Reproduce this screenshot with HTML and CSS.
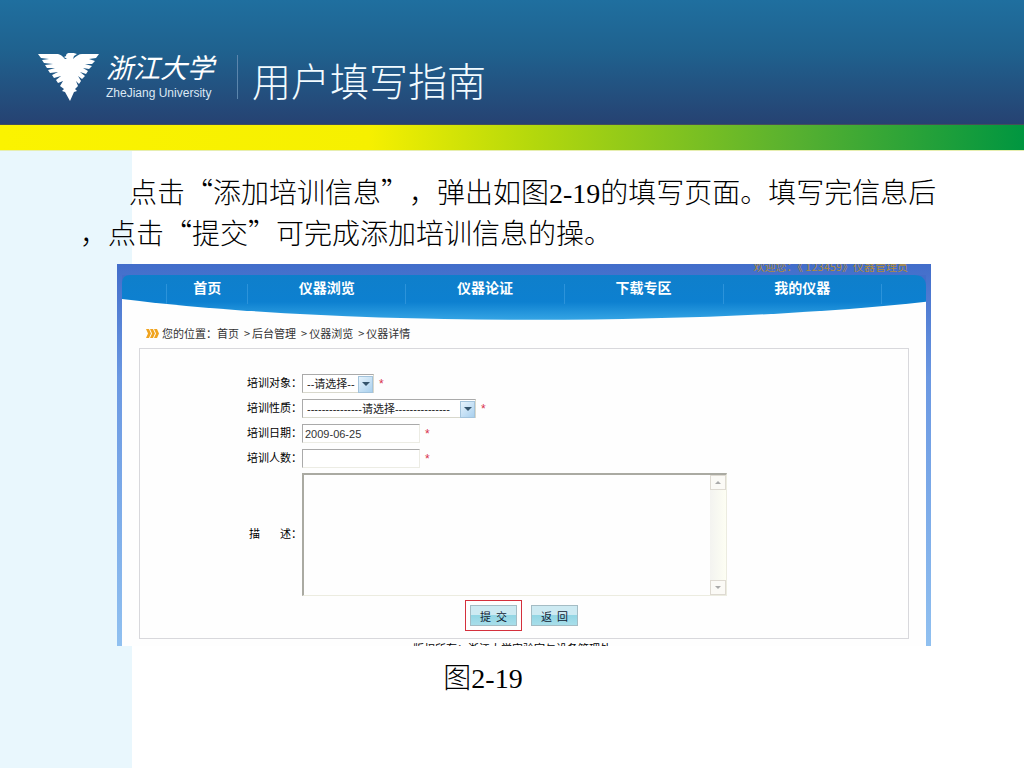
FILE: index.html
```html
<!DOCTYPE html>
<html lang="zh-CN">
<head>
    <meta charset="UTF-8">
    <meta name="viewport" content="width=device-width, initial-scale=1.0">
    <title>用户填写指南</title>
    <link rel="stylesheet" href="styles.css">
</head>
<body>
    <header class="header">
        <svg class="eagle" viewBox="0 0 62 48" aria-hidden="true">
            <path fill="#fff" d="M0 1 L20 1 C24 2 25 4 27 6 L29 6 L26 4 L28 3 C28 -1 34 -1 39 1 L36 3 L35 6 C38 3 41 1 44 1 L61 1 L58 5 L51 6 L57 8 L54 11 L47 11 L54 13 L51 16 L45 15 L50 18 L48 21 L42 19 L47 23 L44 26 L40 23 L43 28 L41 31 L38 28 L40 33 L37 36 L39 38 L36 39 L32 48 L27 39 L24 38 L26 36 L22 33 L25 28 L20 30 L18 27 L23 23 L16 25 L14 22 L20 19 L12 20 L10 17 L17 15 L9 15 L7 12 L15 11 L6 10 L4 7 L11 6 L3 5 Z"/>
        </svg>
        <div class="school">
            <div class="school-cn">浙江大学</div>
            <div class="school-en">ZheJiang University</div>
        </div>
        <h1>用户填写指南</h1>
    </header>
    <div class="strip"></div>

    <main class="content">
        <p class="intro">点击“添加培训信息”，弹出如图<span class="num">2-19</span>的填写页面。填写完信息后<br>，点击“提交”可完成添加培训信息的操。</p>

        <figure>
            <div class="window">
                <div class="topbar"><span>欢迎您：《 123459》仪器管理员</span></div>
                <div class="page">
                    <div class="banner">
                        <svg class="wave" viewBox="0 0 804 48" preserveAspectRatio="none" aria-hidden="true">
                            <defs>
                                <linearGradient id="blue" x1="0" y1="0" x2="0" y2="1">
                                    <stop offset="0" stop-color="#0f7fcb"/>
                                    <stop offset="0.6" stop-color="#0d80d0"/>
                                    <stop offset="1" stop-color="#34a4e4"/>
                                </linearGradient>
                            </defs>
                            <path fill="url(#blue)" d="M0 8 Q0 0 8 0 H792 Q804 0 804 12 V28 C600 52 230 55 0 25 Z"/>
                        </svg>
                        <nav>
                            <a href="#">首页</a>
                            <a href="#">仪器浏览</a>
                            <a href="#">仪器论证</a>
                            <a href="#">下载专区</a>
                            <a href="#">我的仪器</a>
                        </nav>
                    </div>

                    <div class="crumbs">
                        <svg width="13" height="9" viewBox="0 0 13 9" aria-hidden="true">
                            <path fill="#f0a420" d="M0 0h3l2 4.500-2 4.500H0l2-4.500zM4 0h3l2 4.500-2 4.500H4l2-4.500zM8 0h3l2 4.500-2 4.500H8l2-4.500z"/>
                        </svg>
                        <div>您的位置：首页<span class="sep">&gt;</span>后台管理<span class="sep">&gt;</span>仪器浏览<span class="sep">&gt;</span>仪器详情</div>
                    </div>

                    <form class="panel">
                        <div class="row">
                            <label for="target">培训对象：</label>
                            <span class="select short"><select id="target"><option>--请选择--</option></select></span>
                            <span class="star">*</span>
                        </div>
                        <div class="row">
                            <label for="kind">培训性质：</label>
                            <span class="select long"><select id="kind"><option>---------------请选择---------------</option></select></span>
                            <span class="star">*</span>
                        </div>
                        <div class="row">
                            <label for="date">培训日期：</label>
                            <input type="text" id="date" value="2009-06-25">
                            <span class="star">*</span>
                        </div>
                        <div class="row">
                            <label for="count">培训人数：</label>
                            <input type="text" id="count">
                            <span class="star">*</span>
                        </div>
                        <div class="row desc">
                            <label for="desc"><span>描</span><span>述：</span></label>
                            <div class="area">
                                <textarea id="desc"></textarea>
                                <div class="scroll">
                                    <button type="button" class="up" aria-label="向上"></button>
                                    <button type="button" class="down" aria-label="向下"></button>
                                </div>
                            </div>
                        </div>
                        <div class="actions">
                            <span class="mark"><button type="button" class="btn">提&nbsp; 交</button></span>
                            <button type="button" class="btn">返&nbsp; 回</button>
                        </div>
                    </form>
                    <div class="copyright">版权所有：浙江大学实验室与设备管理处</div>
                </div>
            </div>
            <figcaption>图<span class="num">2-19</span></figcaption>
        </figure>
    </main>
</body>
</html>
```
FILE: styles.css
```css
* {
    margin: 0;
    padding: 0;
    box-sizing: border-box;
}

body {
    min-height: 100vh;
    display: flex;
    flex-direction: column;
    background: #fff;
    font-family: "Noto Sans CJK SC", sans-serif;
    color: #000;
}

/* 页眉 */
.header {
    height: 125px;
    display: flex;
    align-items: center;
    padding: 29px 38px 0;
    background: linear-gradient(#1f6f9f, #1f628f 40%, #264272);
    border-bottom: 1px solid #44505a;
    color: #fff;
}

.eagle {
    width: 62px;
    height: 48px;
}

.school {
    width: 132px;
    height: 44px;
    margin-left: 6px;
    display: flex;
    flex-direction: column;
    justify-content: center;
    border-right: 1px solid #5c86ad;
    white-space: nowrap;
}

.school-cn {
    font-size: 27px;
    line-height: 28px;
    font-style: italic;
}

.school-en {
    padding-top: 4px;
    font-family: "Liberation Sans", Arial, sans-serif;
    font-size: 12px;
    line-height: 16px;
    color: #dbe8f4;
}

h1 {
    margin-left: 14px;
    padding-top: 4px;
    font-size: 39px;
    line-height: 44px;
    font-weight: 300;
    color: #f2fbff;
}

.strip {
    height: 26px;
    background: linear-gradient(90deg, #fbf300, #f6f000 36%, #b4d80c 52%, #56b030 78%, #009640);
    border-bottom: 1px solid #e6eeb0;
}

/* 正文 */
.content {
    flex: 1;
    padding: 20px 60px 20px 80px;
    background: linear-gradient(90deg, #e9f7fd 132px, #fff 132px);
}

.intro {
    font-size: 28px;
    line-height: 41px;
    font-weight: 300;
    text-indent: 49px;
    text-spacing-trim: space-all;
}

.num {
    font-family: "Liberation Serif", "Times New Roman", serif;
    line-height: 1;
}

figure {
    margin: 11px 33px 0 37px;
}

figcaption {
    padding: 10px 82px 0 0;
    font-size: 28px;
    line-height: 41px;
    font-weight: 300;
    text-align: center;
}

.window {
    padding: 0 5px;
    background: linear-gradient(#426dca, #6b98e2 30%, #90c0f0);
}

.topbar {
    height: 11px;
    padding-right: 18px;
    overflow: hidden;
    text-align: right;
    font-size: 11px;
    line-height: 5px;
    color: #b08c3c;
}

.topbar span {
    display: block;
}

.page {
    background: linear-gradient(#426dca 20px, #fefefe 20px);
    font-size: 11px;
}

.banner {
    display: grid;
    height: 46px;
}

.wave,
nav {
    grid-area: 1 / 1;
}

.wave {
    width: 100%;
    height: 46px;
}

nav {
    display: grid;
    grid-template-columns: 81fr 158fr 158fr 159fr 159fr;
    padding: 9px 5.5% 0;
    z-index: 1;
}

nav a {
    height: 20px;
    border-left: 1px solid #2c93da;
    color: #fff;
    font-size: 14px;
    line-height: 7px;
    font-weight: bold;
    text-align: center;
    text-decoration: none;
}

nav a:last-child {
    border-right: 1px solid #2c93da;
}

.crumbs {
    display: flex;
    align-items: center;
    gap: 3px;
    height: 27px;
    padding: 0 0 3px 24px;
    color: #333;
    white-space: nowrap;
}

.sep {
    margin: 0 2px 0 5px;
}

/* 表单 */
.panel {
    margin: 0 17px;
    padding: 22px 0 7px;
    border: 1px solid #d8d8dc;
}

.row {
    display: grid;
    grid-template-columns: 55px auto auto;
    justify-content: start;
    align-items: center;
    height: 25px;
    padding-left: 107px;
}

.row label {
    padding-bottom: 3px;
    white-space: nowrap;
    line-height: 20px;
}

.star {
    margin-left: 5px;
    color: #d8304c;
    font-family: "Liberation Sans", Arial, sans-serif;
    font-size: 12px;
}

.select {
    position: relative;
    display: block;
    height: 19px;
}

.select select {
    appearance: none;
    width: 100%;
    height: 19px;
    padding-left: 4px;
    border: 1px solid #d8d8cc;
    border-top-color: #aaa;
    border-left-color: #aaa;
    border-radius: 0;
    background: #fff;
    font-family: "Liberation Sans", "Noto Sans CJK SC", sans-serif;
    font-size: 11px;
    line-height: 16px;
    color: #222;
}

.select::before {
    content: "";
    position: absolute;
    top: 2px;
    right: 1px;
    width: 13px;
    height: 15px;
    background: linear-gradient(135deg, #e6f3fc, #a9d0ee);
    border: 1px solid #a4c4dc;
    pointer-events: none;
}

.select::after {
    content: "";
    position: absolute;
    top: 8px;
    right: 4px;
    border: 4px solid transparent;
    border-top-color: #34546c;
    border-bottom: 0;
    pointer-events: none;
}

.short {
    width: 72px;
}

.long {
    width: 174px;
}

.row input {
    width: 118px;
    height: 19px;
    padding-left: 2px;
    border: 1px solid #ecece4;
    border-top-color: #aaa;
    border-left-color: #aaa;
    background: #fff;
    font-family: "Liberation Sans", Arial, sans-serif;
    font-size: 11px;
    color: #333;
}

.desc {
    height: 123px;
    margin-top: 2px;
}

.desc label {
    display: flex;
    justify-content: space-between;
    padding-left: 2px;
}

.area {
    display: flex;
    width: 425px;
    height: 123px;
    border: 1px solid #ecece0;
    border-top: 2px solid #aaaaa2;
    border-left: 2px solid #aaaaa2;
}

.area textarea {
    flex: 1;
    border: 0;
    resize: none;
    background: #fefefe;
}

.scroll {
    width: 16px;
    display: flex;
    flex-direction: column;
    justify-content: space-between;
    background: linear-gradient(90deg, #f3f3f0, #fdfef3);
}

.scroll button {
    display: flex;
    align-items: center;
    justify-content: center;
    height: 15px;
    border: 1px solid #dedad2;
    background: #fbfaf6;
}

.up::before,
.down::before {
    content: "";
    border: 3px solid transparent;
}

.up::before {
    border-bottom-color: #aaa;
    border-top: 0;
}

.down::before {
    border-top-color: #aaa;
    border-bottom: 0;
}

.actions {
    display: flex;
    align-items: center;
    gap: 9px;
    padding: 4px 0 0 325px;
}

.mark {
    padding: 4px;
    border: 1px solid #d4303c;
    display: flex;
}

.btn {
    width: 47px;
    height: 21px;
    border: 1px solid #a4bcc4;
    background: linear-gradient(#cdeaf2 50%, #93d6e4 50%, #a8deea);
    font-family: "Noto Sans CJK SC", sans-serif;
    font-size: 11px;
    line-height: 16px;
    color: #123;
}

/* 页脚只露出一条边 */
.copyright {
    height: 7px;
    overflow: hidden;
    padding-right: 24px;
    line-height: 18px;
    text-align: center;
}
```
